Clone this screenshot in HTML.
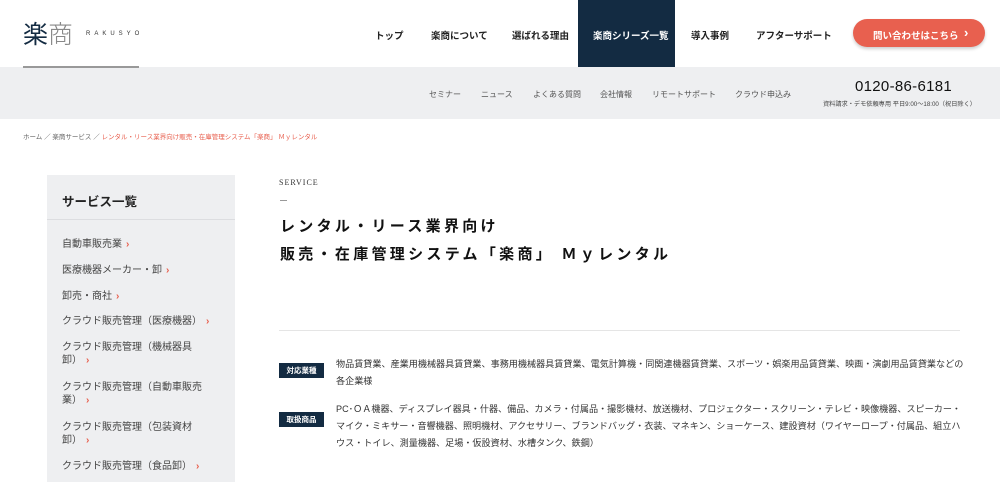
<!DOCTYPE html>
<html><head><meta charset="utf-8"><style>
*{margin:0;padding:0;box-sizing:border-box}
body{width:1000px;height:482px;overflow:hidden;background:#fff;font-family:"Liberation Sans","Noto Sans CJK JP",sans-serif;color:#222;position:relative}
.a{position:absolute;white-space:nowrap}
.nav{font-size:9.5px;font-weight:bold;color:#222;top:28px}
.sub{font-size:8px;color:#555;top:89px}
.side{font-size:10px;color:#444;left:62px;line-height:13px}
.ch{color:#e8604f;font-weight:bold;font-size:10px;margin-left:4px}
.tag{background:#132b42;color:#fff;font-size:7.5px;font-weight:bold;width:45px;height:15px;line-height:15px;text-align:center;left:279px}
.desc{font-size:9.1px;color:#333;left:336px;line-height:17px;width:628px;white-space:normal}
</style></head><body>
<div class="a" style="left:23px;top:18px;font-size:25px;line-height:30px;font-family:'Noto Sans CJK JP',sans-serif"><span style="color:#132b42">楽</span><span style="color:#888;font-weight:300">商</span></div>
<div class="a" style="left:86px;top:31px;font-size:6px;letter-spacing:4px;color:#333">RAKUSYO</div>
<div class="a" style="left:0;top:67px;width:1000px;height:52px;background:#eeeff1"></div>
<div class="a" style="left:23px;top:66px;width:116px;height:2px;background:#999"></div>
<div class="a nav" style="left:375px">トップ</div>
<div class="a nav" style="left:431px">楽商について</div>
<div class="a nav" style="left:512px">選ばれる理由</div>
<div class="a" style="left:578px;top:0;width:97px;height:67px;background:#132b42"></div>
<div class="a nav" style="left:593px;color:#fff">楽商シリーズ一覧</div>
<div class="a nav" style="left:691px">導入事例</div>
<div class="a nav" style="left:756px">アフターサポート</div>
<div class="a" style="left:853px;top:19px;width:132px;height:28px;background:#e8604f;border-radius:14px;box-shadow:0 2px 3px rgba(0,0,0,.2)"></div>
<div class="a nav" style="left:873px;color:#fff">問い合わせはこちら</div>
<div class="a" style="left:964px;top:25px;color:#fff;font-size:13px;line-height:16px;font-weight:bold">›</div>
<div class="a sub" style="left:429px">セミナー</div>
<div class="a sub" style="left:481px">ニュース</div>
<div class="a sub" style="left:533px">よくある質問</div>
<div class="a sub" style="left:600px">会社情報</div>
<div class="a sub" style="left:652px">リモートサポート</div>
<div class="a sub" style="left:735px">クラウド申込み</div>
<div class="a" style="left:855px;top:78px;font-size:15px;color:#111;letter-spacing:.3px">0120-86-6181</div>
<div class="a" style="left:823px;top:99px;font-size:6.2px;color:#444">資料請求・デモ依頼専用 平日9:00〜18:00（祝日除く）</div>
<div class="a" style="left:23px;top:131px;font-size:6.5px;color:#666">ホーム ／ 楽商サービス ／ <span style="color:#e8604f">レンタル・リース業界向け販売・在庫管理システム「楽商」 Ｍｙレンタル</span></div>
<div class="a" style="left:47px;top:175px;width:188px;height:307px;background:#eeeff1"></div>
<div class="a" style="left:47px;top:219px;width:188px;height:1px;background:#dcdde0"></div>
<div class="a" style="left:62px;top:191px;font-size:12.5px;font-weight:bold;color:#222">サービス一覧</div>
<div class="a side" style="top:238px">自動車販売業<span class="ch">›</span></div>
<div class="a side" style="top:264px">医療機器メーカー・卸<span class="ch">›</span></div>
<div class="a side" style="top:290px">卸売・商社<span class="ch">›</span></div>
<div class="a side" style="top:315px">クラウド販売管理（医療機器）<span class="ch">›</span></div>
<div class="a side" style="top:341px">クラウド販売管理（機械器具<br>卸）<span class="ch">›</span></div>
<div class="a side" style="top:381px">クラウド販売管理（自動車販売<br>業）<span class="ch">›</span></div>
<div class="a side" style="top:421px">クラウド販売管理（包装資材<br>卸）<span class="ch">›</span></div>
<div class="a side" style="top:460px">クラウド販売管理（食品卸）<span class="ch">›</span></div>
<div class="a" style="left:279px;top:178px;font-size:8px;letter-spacing:1px;font-family:'Liberation Serif',serif;color:#333">SERVICE</div>
<div class="a" style="left:280px;top:200px;width:7px;height:1px;background:#999"></div>
<div class="a" style="left:280px;top:215px;font-size:15px;font-weight:bold;letter-spacing:3.3px;color:#111">レンタル・リース業界向け</div>
<div class="a" style="left:280px;top:243px;font-size:15px;font-weight:bold;letter-spacing:3.3px;color:#111">販売・在庫管理システム「楽商」 Ｍｙレンタル</div>
<div class="a" style="left:279px;top:330px;width:681px;height:1px;background:#e5e5e5"></div>
<div class="a tag" style="top:363px">対応業種</div>
<div class="a desc" style="top:356px">物品賃貸業、産業用機械器具賃貸業、事務用機械器具賃貸業、電気計算機・同関連機器賃貸業、スポーツ・娯楽用品賃貸業、映画・演劇用品賃貸業などの各企業様</div>
<div class="a tag" style="top:412px">取扱商品</div>
<div class="a desc" style="top:401px">PC･ＯＡ機器、ディスプレイ器具・什器、備品、カメラ・付属品・撮影機材、放送機材、プロジェクター・スクリーン・テレビ・映像機器、スピーカー・マイク・ミキサー・音響機器、照明機材、アクセサリー、ブランドバッグ・衣装、マネキン、ショーケース、建設資材（ワイヤーロープ・付属品、組立ハウス・トイレ、測量機器、足場・仮設資材、水槽タンク、鉄鋼）</div>
</body></html>
